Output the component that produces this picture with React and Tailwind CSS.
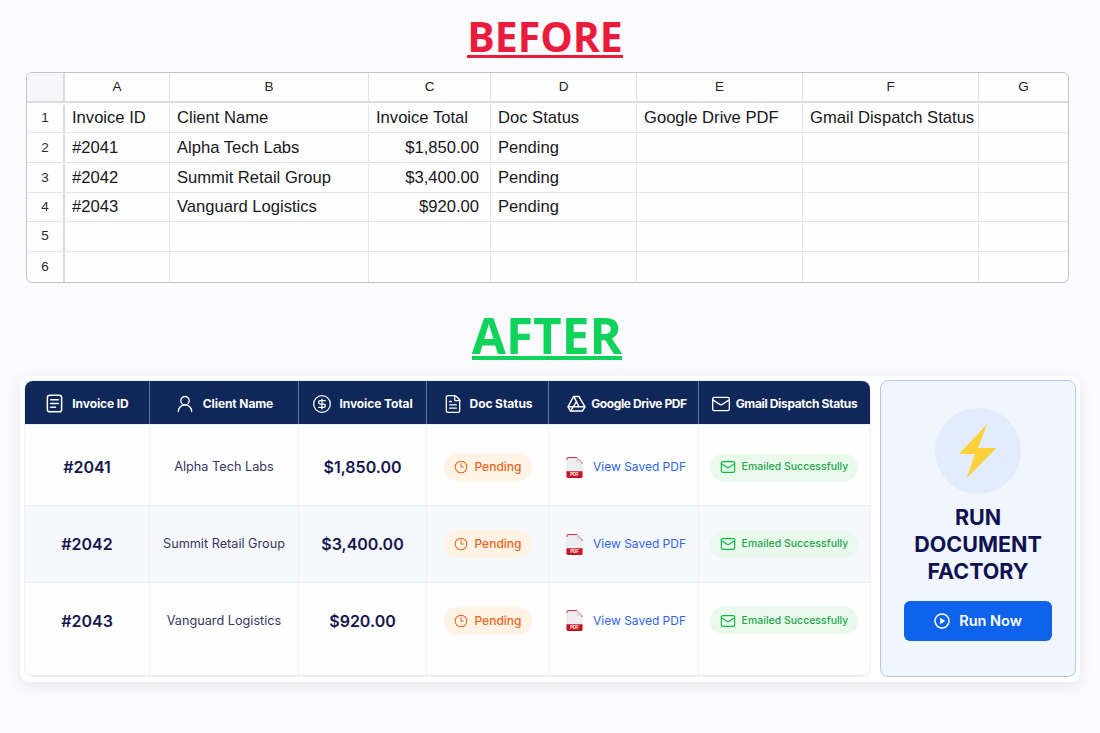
import React from "react";
import { CircleDollarSign, Clock3, FileText, Mail, UserRound } from "lucide-react";

const sheetCols = "grid-cols-[38px_105px_199px_122px_146px_166px_176px_1fr]";
const sheetRows = [
  { h: "h-[30px] pt-[2px]", n: "1", cells: ["Invoice ID", "Client Name", "Invoice Total", "Doc Status", "Google Drive PDF", "Gmail Dispatch Status", ""] },
  { h: "h-[30px] pt-[1px]", n: "2", cells: ["#2041", "Alpha Tech Labs", "$1,850.00", "Pending", "", "", ""] },
  { h: "h-[30px] pt-[1px]", n: "3", cells: ["#2042", "Summit Retail Group", "$3,400.00", "Pending", "", "", ""] },
  { h: "h-[29px]", n: "4", cells: ["#2043", "Vanguard Logistics", "$920.00", "Pending", "", "", ""] },
  { h: "h-[30px]", n: "5", cells: ["", "", "", "", "", "", ""] },
  { h: "h-[30px]", n: "6", cells: ["", "", "", "", "", "", ""] },
];

const invoices = [
  { id: "#2041", client: "Alpha Tech Labs", total: "$1,850.00", row: "h-[81px] bg-[#fefeff]", cell: "pt-[4px]" },
  { id: "#2042", client: "Summit Retail Group", total: "$3,400.00", row: "h-[77px] bg-[#f7f8fd]", cell: "" },
  { id: "#2043", client: "Vanguard Logistics", total: "$920.00", row: "h-[94px] bg-[#fefeff]", cell: "pb-[18px]" },
];

const tableCols = "grid-cols-[125px_149px_128px_122px_150px_1fr]";

function InvoiceIcon() {
  return (
    <svg viewBox="0 0 20 20" className="size-[19px]" fill="none" stroke="currentColor" strokeWidth="1.6" strokeLinecap="round">
      <rect x="2.5" y="1.2" width="15" height="17.6" rx="2.5" />
      <path d="M6 6h8M6 10h8M6 14h5" />
    </svg>
  );
}

function DriveIcon() {
  return (
    <svg viewBox="0 0 20 18" className="h-[17px] w-[19px]" fill="none" stroke="currentColor" strokeWidth="1.5" strokeLinejoin="round">
      <path d="M7 1.5h5.5l6.5 11-2.8 4.5H3.6L1 12.5z" />
      <path d="M7 1.5l3 5.5-6.4 10M12.5 12.5H1M12.5 12.5L10 7M19 12.5h-6.5" />
    </svg>
  );
}

function PdfIcon() {
  return (
    <svg viewBox="0 0 18 22" className="h-[21px] w-[17px] shrink-0">
      <path d="M1 1.5A1 1 0 0 1 2 .5h9.5L17 6v15H1z" fill="#eeeef2" stroke="#d9d9de" strokeWidth="0.5" />
      <path d="M1 3V1.5A1 1 0 0 1 2 .5h9.5L17 6v1" fill="none" stroke="#c8202c" strokeWidth="1" />
      <path d="M11.5.5V6H17z" fill="#d9d9e0" />
      <path d="M0.5 15h17v5.5a1.5 1.5 0 0 1-1.5 1.5H2a1.5 1.5 0 0 1-1.5-1.5z" fill="#c8141f" />
      <text x="9" y="20.3" textAnchor="middle" fontSize="4.6" fontWeight="700" fill="#ffffff" fontFamily="Inter, sans-serif">PDF</text>
    </svg>
  );
}

export default function App() {
  return (
    <div className="h-[733px] w-[1100px] overflow-hidden bg-[#fbfafe] font-['Inter',sans-serif]">
      <div className="flex justify-center pt-[18px] pr-[10px]">
        <h2 className="border-b-[3px] border-[#ea1c3c] font-['Open_Sans',sans-serif] text-[41px] leading-[37px] font-bold text-[#ea1c3c]">
          BEFORE
        </h2>
      </div>

      {/* Spreadsheet */}
      <div className="mt-[14px] ml-[26px] w-[1043px] overflow-hidden rounded-md border border-[#c6c6ca] bg-[#fefeff] font-['Liberation_Sans',sans-serif] text-[#17171b]">
        <div className={`grid h-[30px] ${sheetCols} border-b-2 border-[#dcdce0] text-[13.5px] text-[#222226]`}>
          <div className="border-r-2 border-[#dcdce0] bg-[#f7f7f9]" />
          {["A", "B", "C", "D", "E", "F", "G"].map((col) => (
            <div key={col} className="flex items-center justify-center border-r border-[#e2e2e6] last:border-r-0">
              {col}
            </div>
          ))}
        </div>
        {sheetRows.map((row) => (
          <div key={row.n} className={`grid ${row.h} ${sheetCols} border-b border-[#e6e6ea] last:border-b-0`}>
            <div className="flex items-center justify-center border-r-2 border-[#dcdce0] text-[13.5px] text-[#2a2a2e]">
              {row.n}
            </div>
            {row.cells.map((cell, i) => (
              <div
                key={i}
                className={`flex items-center border-r border-[#e6e6ea] text-[16.6px] whitespace-nowrap last:border-r-0 ${
                  i === 2 && row.n !== "1" ? "justify-end pr-[11px]" : "pl-[7px]"
                }`}
              >
                {cell}
              </div>
            ))}
          </div>
        ))}
      </div>

      <div className="mt-[32px] flex justify-center pr-[6px]">
        <h2 className="border-b-4 border-[#10d35c] font-['Open_Sans',sans-serif] text-[49.5px] leading-[41px] font-bold text-[#10d35c]">
          AFTER
        </h2>
      </div>

      {/* Styled dashboard */}
      <div className="mt-[16px] ml-[20px] flex h-[306px] w-[1060px] gap-[10px] rounded-lg bg-white p-[5px] shadow-[0_4px_14px_rgba(40,40,80,0.09)]">
        <div className="h-[295px] w-[845px] shrink-0 overflow-hidden rounded-lg border-b border-[#e8e8f0] shadow-[0_0_0_1px_#f0f0f6]">
          <div className={`grid h-[43px] ${tableCols} bg-[#10275a] text-[12px] font-bold tracking-[-0.1px] text-white`}>
            <div className="flex items-center justify-center gap-[8px] border-r border-[#66779d] pt-[2px]"><InvoiceIcon />Invoice ID</div>
            <div className="flex items-center justify-center gap-[8px] border-r border-[#66779d] pt-[2px]"><UserRound size={20} strokeWidth={1.6} />Client Name</div>
            <div className="flex items-center justify-center gap-[7px] border-r border-[#66779d] pt-[2px]"><CircleDollarSign size={20} strokeWidth={1.5} />Invoice Total</div>
            <div className="flex items-center justify-center gap-[7px] border-r border-[#66779d] pt-[2px]"><FileText size={20} strokeWidth={1.6} />Doc Status</div>
            <div className="flex items-center justify-center gap-[5px] border-r border-[#66779d] pt-[2px] pl-[7px] tracking-[-0.4px]"><DriveIcon />Google Drive PDF</div>
            <div className="flex items-center justify-center gap-[5px] pt-[2px] pr-[1px] tracking-[-0.35px]"><Mail size={20} strokeWidth={1.6} />Gmail Dispatch Status</div>
          </div>
          {invoices.map((inv) => (
            <div key={inv.id} className={`grid ${inv.row} ${tableCols} border-t border-[#ececf3] first:border-t-0`}>
              <div className={`flex items-center justify-center border-r border-[#efeff5] text-[16px] font-semibold text-[#14164f] ${inv.cell}`}>{inv.id}</div>
              <div className={`flex items-center justify-center border-r border-[#efeff5] text-[12.7px] text-[#36375f] ${inv.cell}`}>{inv.client}</div>
              <div className={`flex items-center justify-center border-r border-[#efeff5] text-[16px] font-semibold text-[#14164f] ${inv.cell}`}>{inv.total}</div>
              <div className={`flex items-center justify-center border-r border-[#efeff5] ${inv.cell}`}>
                <span className="flex h-[28px] w-[88px] items-center justify-center gap-[7px] rounded-full bg-[#fff3e6] text-[12px] font-medium text-[#e8671c]">
                  <Clock3 size={14} strokeWidth={1.8} />
                  Pending
                </span>
              </div>
              <div className={`flex items-center justify-center gap-[10px] border-r border-[#efeff5] pl-[5px] ${inv.cell}`}>
                <PdfIcon />
                <span className="text-[12px] text-[#2f66ea]">View Saved PDF</span>
              </div>
              <div className={`flex items-center justify-center pr-[1px] ${inv.cell}`}>
                <span className="flex h-[27px] w-[148px] items-center justify-center gap-[6px] rounded-full bg-[#e9f9ec] text-[10.5px] font-medium text-[#1fa74b]">
                  <Mail size={16} strokeWidth={1.8} className="text-[#14b84a]" />
                  Emailed Successfully
                </span>
              </div>
            </div>
          ))}
        </div>

        {/* Action card */}
        <div className="flex h-[297px] w-[196px] shrink-0 -translate-y-px flex-col items-center rounded-lg border border-[#b4c9ec] bg-[#f0f5fe] pt-[27px]">
          <div className="flex size-[86px] items-center justify-center rounded-full bg-[#e3ecfb]">
            <svg viewBox="0 0 38 54" className="h-[54px] w-[38px]">
              <path d="M28.3 0 0 30h16L7.7 54l29.6-30H19z" fill="#fcd13a" />
            </svg>
          </div>
          <h3 className="mt-[10px] text-center text-[21.5px] leading-[27px] font-bold text-[#0e1250]">
            RUN<br />DOCUMENT<br />FACTORY
          </h3>
          <button className="mt-[16px] flex h-[40px] w-[148px] items-center justify-center gap-[9px] rounded-md bg-[#0f62ec] text-[14.5px] font-semibold text-white">
            <svg viewBox="0 0 16 16" className="size-[16px]" fill="none">
              <circle cx="8" cy="8" r="7" stroke="currentColor" strokeWidth="1.5" />
              <path d="M6.2 4.8v6.4L11.2 8z" fill="currentColor" />
            </svg>
            Run Now
          </button>
        </div>
      </div>
    </div>
  );
}
